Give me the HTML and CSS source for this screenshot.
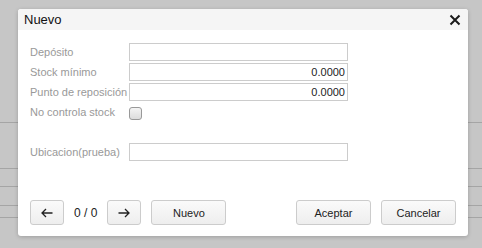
FILE: index.html
```html
<!DOCTYPE html>
<html lang="es">
<head>
  <meta charset="UTF-8">
  <title>Nuevo</title>
  <link rel="stylesheet" href="styles.css">
</head>
<body>
  <div class="backdrop">
    <div class="bg-line l1"></div>
    <div class="bg-line l2"></div>
    <div class="bg-line l3"></div>
    <div class="bg-line l4"></div>
    <div class="bg-line l5"></div>
  </div>

  <div class="dialog">
    <div class="dialog-head">
      <span class="title">Nuevo</span>
      <svg class="close" width="12" height="12" viewBox="0 0 12 12"><path d="M1.5 1.5 L10.5 10.5 M10.5 1.5 L1.5 10.5" stroke="#1a1a1a" stroke-width="2" fill="none"/></svg>
    </div>
    <div class="dialog-body">
      <div class="row">
        <label>Depósito</label>
        <input type="text" class="field">
      </div>
      <div class="row">
        <label>Stock mínimo</label>
        <input type="text" class="field num" value="0.0000">
      </div>
      <div class="row">
        <label>Punto de reposición</label>
        <input type="text" class="field num" value="0.0000">
      </div>
      <div class="row">
        <label>No controla stock</label>
        <span class="check"></span>
      </div>
      <div class="row spaced">
        <label>Ubicacion(prueba)</label>
        <input type="text" class="field">
      </div>
    </div>
    <div class="dialog-foot">
      <button class="btn arrow"><svg width="12" height="10" viewBox="0 0 12 10"><path d="M11.5 5 H1 M5 1 L1 5 L5 9" stroke="#222" stroke-width="1.3" fill="none"/></svg></button>
      <span class="count">0 / 0</span>
      <button class="btn arrow"><svg width="12" height="10" viewBox="0 0 12 10"><path d="M0.5 5 H11 M7 1 L11 5 L7 9" stroke="#222" stroke-width="1.3" fill="none"/></svg></button>
      <button class="btn wide">Nuevo</button>
      <span class="grow"></span>
      <button class="btn wide">Aceptar</button>
      <button class="btn wide">Cancelar</button>
    </div>
  </div>
</body>
</html>
```

FILE: styles.css
```css
body { margin: 0; width: 482px; height: 248px; background: #c6c6c6; font-family: "Liberation Sans", Arial, sans-serif; font-size: 11px; overflow: hidden; position: relative; }
.backdrop { position: absolute; inset: 0; }
.bg-line { position: absolute; left: 0; right: 0; height: 1px; background: #a5a5a5; }
.l1 { top: 122px; }
.l2 { top: 168px; }
.l3 { top: 186px; }
.l4 { top: 205px; }
.l5 { top: 217px; }

.dialog { position: absolute; left: 18px; top: 9px; width: 450px; height: 227px; background: #fff; border-radius: 3px; box-shadow: 0 1px 4px rgba(0,0,0,0.2); display: flex; flex-direction: column; }
.dialog-head { height: 21px; background: #f5f5f5; border-radius: 3px 3px 0 0; display: flex; align-items: center; justify-content: space-between; padding: 0 7px 0 6px; }
.title { font-size: 13px; color: #111; }
.close { display: block; }

.dialog-body { padding: 13px 12px 0 12px; flex: 1; }
.row { display: flex; align-items: center; height: 18px; margin-bottom: 2px; }
.row.spaced { margin-top: 22px; }
label { width: 99px; color: #999; white-space: nowrap; }
.field { width: 219px; height: 18px; box-sizing: border-box; border: 1px solid #ccc; padding: 0 2px; font-family: inherit; font-size: 11px; color: #222; margin: 0; }
.field.num { text-align: right; }
.check { width: 11px; height: 11px; border: 1px solid #999; border-radius: 3px; background: linear-gradient(#f4f4f4, #dcdcdc); margin-top: 2px; }

.dialog-foot { display: flex; align-items: center; padding: 0 12px 11px 12px; gap: 10px; }
.btn { height: 25px; border: 1px solid #ccc; border-radius: 3px; background: linear-gradient(#fafafa, #eee); font-family: inherit; font-size: 11px; color: #222; padding: 0; display: flex; align-items: center; justify-content: center; }
.arrow { width: 34px; }
.wide { width: 75px; }
.count { font-size: 12px; color: #222; margin: 0; }
.grow { flex: 1; }
```
